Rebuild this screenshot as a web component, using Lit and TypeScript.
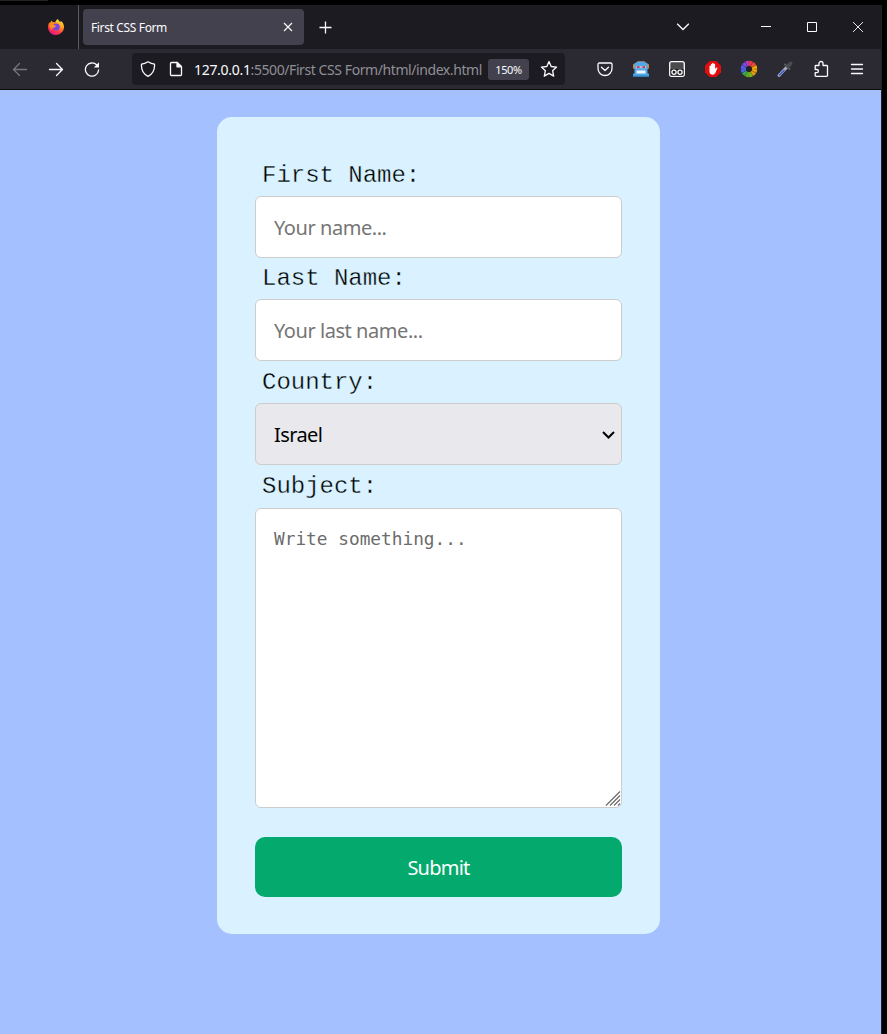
import { LitElement, html, css, svg } from "lit";
import { customElement } from "lit/decorators.js";

const WHEEL = ["#f0383c", "#f04a38", "#f5a800", "#f0a010", "#e0a010", "#7cb518", "#62ae22", "#36a852", "#4a63e8", "#5a5cf0", "#7a48e0", "#b13cc8"];

@customElement("browser-tabs")
class BrowserTabs extends LitElement {
  static styles = css`
    :host { display: flex; height: 44px; background: #1c1b22; color: #fbfbfe; box-sizing: border-box; }
    svg { display: block; fill: none; stroke: #fbfbfe; }
    .brand { width: 31px; border-right: 1px solid #5b5a60; display: flex; align-items: center; padding-left: 47px; }
    .tab { margin: 4px 0 0 4px; width: 221px; height: 36px; box-sizing: border-box; padding: 0 9px 0 8px; border-radius: 4px; background: #42414d; display: flex; align-items: center; justify-content: space-between; font: 12px/18px "Noto Sans", sans-serif; letter-spacing: -0.36px; }
    .title { padding-top: 2px; }
    .plus { margin: 16px 0 0 15px; }
    .controls { margin-left: auto; display: flex; padding-right: 17px; }
    .chevron { margin: 17px 70px 0 0; }
    .min { margin: 16px 34px 0 0; }
    .max { margin: 16px 34px 0 0; }
    .close { margin: 16px 0 0 0; }
  `;
  render() {
    return html`
      <div class="brand">
        <svg width="18" height="18" viewBox="0 0 18 18">
          <defs>
            <linearGradient id="fire" x1="0.8" y1="0" x2="0.3" y2="1">
              <stop offset="0" stop-color="#fff23c"/><stop offset=".4" stop-color="#ff9a1f"/><stop offset=".7" stop-color="#ff3b47"/><stop offset="1" stop-color="#e31587"/>
            </linearGradient>
          </defs>
          <g stroke="none">
            <path fill="url(#fire)" d="M11 1c.3 1.500 1.400 2.300 2.500 3.300.2-.5.200-1 .1-1.500C15.900 4.300 17 6.600 17 9.100 17 13.500 13.400 17 9 17S1 13.500 1 9.200c0-2 .8-3.800 1.300-5l.8 1c.5-1.200 1.100-2 1.900-2.600.1.800.3 1.300.7 1.800 1-.2 1.800 0 2.500.3C8.300 3 9.700 1.600 11 1z"/>
            <path fill="#ff8a16" d="M2.500 5.500c1-1.500 2.500-2 4.500-1.300L8.800 6 6 8.200 4.700 12C3 10 2 8 2.500 5.500z"/>
            <circle cx="9.300" cy="9" r="3.500" fill="#7a43e6"/>
            <path fill="#ff9d25" d="M5 7.600c1.500-.6 2.500-.2 4.200.1-.3 1-1.900 1.200-2.300 2.300-1 .2-2-1-1.900-2.400z"/>
          </g>
        </svg>
      </div>
      <div class="tab"><span class="title">First CSS Form</span>
        <svg width="14" height="14" viewBox="0 0 14 14"><path d="M3 3l8 8M11 3l-8 8" stroke-width="1.100"/></svg>
      </div>
      <svg class="plus" width="13" height="13" viewBox="0 0 13 13"><path d="M6.500.5v12M.5 6.500h12" stroke-width="1.300"/></svg>
      <div class="controls">
        <svg class="chevron" width="14" height="10" viewBox="0 0 14 10"><path d="M1.200 1.800L7 7.500l5.800-5.700" stroke-width="1.300"/></svg>
        <svg class="min" width="12" height="12" viewBox="0 0 12 12"><path d="M1 5.500h10"/></svg>
        <svg class="max" width="12" height="12" viewBox="0 0 12 12"><path d="M1.500 1.500h9v9h-9z"/></svg>
        <svg class="close" width="12" height="12" viewBox="0 0 12 12"><path d="M1 1l10 10M11 1L1 11" stroke-width=".9"/></svg>
      </div>`;
  }
}

@customElement("browser-toolbar")
class BrowserToolbar extends LitElement {
  static styles = css`
    :host { display: flex; align-items: center; height: 41px; box-sizing: border-box; background: #2b2a33; border-bottom: 1px solid #0c0c0d; padding-left: 12px; font-family: "Noto Sans", sans-serif; }
    svg { display: block; flex: none; fill: none; stroke: #fbfbfe; stroke-width: 1.300; stroke-linecap: round; stroke-linejoin: round; }
    .nav { display: flex; gap: 20px; width: 120px; }
    .dim { stroke: #77767d; }
    .url { width: 433px; height: 32px; border-radius: 4px; background: #1c1b22; display: flex; align-items: center; box-sizing: border-box; padding-left: 8px; color: #8f8f95; font-size: 14px; white-space: nowrap; }
    .page { margin-left: 12px; }
    .address { margin-left: 10px; width: 294px; letter-spacing: -0.42px; padding-top: 1px; box-sizing: border-box; }
    .host { color: #fbfbfe; letter-spacing: -0.3px; }
    .zoom { width: 41px; height: 21px; border-radius: 3px; background: #42414d; color: #fbfbfe; font-size: 11px; line-height: 22px; letter-spacing: -0.4px; text-align: center; margin-right: 11px; }
    .tools { display: flex; gap: 18px; margin-left: 31px; }
  `;
  render() {
    const slices = WHEEL.map((color, i) => {
      const p = (r: number, deg: number) => {
        const a = ((deg - 90) * Math.PI) / 180;
        return `${(9 + r * Math.cos(a)).toFixed(2)} ${(9 + r * Math.sin(a)).toFixed(2)}`;
      };
      const s = i * 30 + 1, e = i * 30 + 29;
      return svg`<path stroke="none" fill=${color} d="M${p(3.2, s)}L${p(8.200, s)}A8.200 8.200 0 0 1 ${p(8.200, e)}L${p(3.2, e)}Z"/>`;
    });
    return html`
      <div class="nav">
        <svg class="dim" width="16" height="16" viewBox="0 0 16 16"><path d="M14.500 8.500H1.500M7.500 2.500l-6 6 6 6"/></svg>
        <svg width="16" height="16" viewBox="0 0 16 16"><path d="M1.500 8.500h13M8.500 2.500l6 6-6 6"/></svg>
        <svg width="16" height="16" viewBox="0 0 16 16"><path d="M14.600 9A6.600 6.600 0 1 1 12.800 4"/><path d="M15 1.300v5.200H9.800z" fill="#fbfbfe" stroke="none"/></svg>
      </div>
      <div class="url">
        <svg width="16" height="16" viewBox="0 0 16 16"><path d="M8 .8c2 1.300 4.200 2.200 6.500 2.400C14.900 8.700 12.800 13 8 15.400 3.200 13 1.100 8.700 1.500 3.200 3.800 3 6 2.100 8 .8z"/></svg>
        <svg class="page" width="16" height="16" viewBox="0 0 16 16"><path d="M3.500 1.500h5.700L13.500 5.800v7.700a1 1 0 0 1-1 1h-9a1 1 0 0 1-1-1v-11a1 1 0 0 1 1-1z"/><path d="M9 1.500v4.300h4.500z" fill="#fbfbfe"/></svg>
        <div class="address"><span class="host">127.0.0.1</span>:5500/First CSS Form/html/index.html</div>
        <div class="zoom">150%</div>
        <svg width="18" height="18" viewBox="0 0 18 18"><path d="M9 1.500l2.200 5 5.400.6-4 3.600 1.100 5.400L9 13.400l-4.700 2.700 1.100-5.400-4-3.600 5.400-.6z"/></svg>
      </div>
      <div class="tools">
        <svg width="18" height="18" viewBox="0 0 18 18"><path d="M3.300 3h11.400a1.300 1.300 0 0 1 1.300 1.300V8.500A7 7 0 0 1 2 8.500V4.300A1.300 1.300 0 0 1 3.300 3zM5.500 7.300L9 10.500l3.500-3.200"/></svg>
        <svg width="18" height="18" viewBox="0 0 18 18"><g stroke="none"><rect x="5" y="1" width="8" height="2" rx="1" fill="#8b7b70"/><rect x="1" y="3.500" width="16" height="5.500" rx="1.500" fill="#c88a48"/><path d="M2.500 5Q2.500 2 6 2h6q3.500 0 3.500 3v8.500h.8q.7 0 .7.700V16H1v-1.800q0-.7.700-.7h.8z" fill="#55a8e6"/><path d="M4 6h10v2.300H4z" fill="#b6b8d8"/><path d="M5 6.300h2.500V8H5zM10.500 6.300H13V8h-2.500z" fill="#c53355"/><rect x="4.500" y="10.500" width="9" height="3" rx=".6" fill="#eef5fb"/><path d="M1 15.500h16V17H1z" fill="#2f7fbd"/></g></svg>
        <svg width="18" height="18" viewBox="0 0 18 18"><rect x="1.700" y="1.700" width="14.600" height="14.600" rx="2" fill="#4a4a4c"/><path d="M2.500 9h13v6.500h-13z" fill="#202025" stroke="none"/><circle cx="6" cy="12.200" r="2.100"/><circle cx="12" cy="12.200" r="2.100"/></svg>
        <svg width="18" height="18" viewBox="0 0 18 18"><path fill="#e40d0d" stroke="none" d="M5.700 1h6.600L17 5.700v6.600L12.300 17H5.700L1 12.300V5.700z"/><path fill="#fff" stroke="none" d="M5.500 6q.7-.8 1.400 0V4.200q.7-.8 1.300 0v-1q.8-.9 1.500 0v1q.7-.7 1.400 0V9l1-1.200q1-.6 1.400.1l-2.200 5Q10.500 14.700 8.800 14.700 6 14.700 5.500 12z"/></svg>
        <svg width="18" height="18" viewBox="0 0 18 18"><circle cx="9" cy="9" r="7.500" fill="#202025" stroke="none"/>${slices}</svg>
        <svg width="18" height="18" viewBox="0 0 18 18"><path d="M3 15.500L10.500 7.500" stroke="#a9adbb" stroke-width="3"/><path d="M3.500 15L8 10.500" stroke="#3e5fd0" stroke-width="1.700"/><path d="M9 4.500l4.500 4.500" stroke="#5c5c60" stroke-width="1.800"/><path d="M12 6.200L14.500 3.500" stroke="#4c4c50" stroke-width="3.800"/></svg>
        <svg width="18" height="18" viewBox="0 0 18 18"><path d="M4 5.500h3V3.500a2 2 0 0 1 4 0v2h3.700a.8.800 0 0 1 .8.800v9.200a.8.800 0 0 1-.8.800H4a.8.800 0 0 1-.8-.8v-2.800h1.600a1.500 1.500 0 0 0 0-3.200H3.200V6.300q0-.8.800-.8z"/></svg>
        <svg width="18" height="18" viewBox="0 0 18 18"><path d="M3.500 4.500h11M3.500 9h11M3.500 13.500h11"/></svg>
      </div>`;
  }
}

@customElement("contact-form")
class ContactForm extends LitElement {
  static styles = css`
    :host { display: block; box-sizing: border-box; width: 443px; height: 817px; padding: 38px; border-radius: 15px; background: #daf2ff; }
    .form { display: grid; grid-template-rows: 41px 62px 41px 62px 42px 62px 43px 300px 29px 60px; }
    .label { padding-left: 7px; font: 24px/41px "Liberation Mono", monospace; color: #000; letter-spacing: -0.02px; -webkit-text-stroke: 0.35px #daf2ff; }
    .low { line-height: 43px; }
    .control { box-sizing: border-box; width: 100%; margin: 0; border: 1px solid #ccc; border-radius: 6px; background: #fff; padding: 0 18px; font: 20px "Noto Sans", sans-serif; letter-spacing: -0.45px; color: #000; outline: none; }
    .control::placeholder { color: #757575; opacity: 1; }
    .select { background: #e9e9ed; display: flex; justify-content: space-between; align-items: center; padding-right: 5px; letter-spacing: -0.6px; }
    .area { position: relative; padding: 17px 18px; font: 17.800px/25px "DejaVu Sans Mono", monospace; letter-spacing: 0; color: #6c6c6c; }
    .grip { position: absolute; right: -1px; bottom: 0; }
    .submit { grid-row: 10; border: 0; border-radius: 10px; background: #04aa6d; color: #fff; font: 20px "Noto Sans", sans-serif; letter-spacing: -0.75px; padding: 0; }
    svg { display: block; fill: none; }
  `;
  render() {
    return html`<div class="form">
      <label class="label">First Name:</label>
      <input class="control" placeholder="Your name...">
      <label class="label">Last Name:</label>
      <input class="control" placeholder="Your last name...">
      <label class="label low">Country:</label>
      <div class="control select"><span>Israel</span>
        <svg width="15" height="12" viewBox="0 0 15 12"><path d="M2 4l5.500 5.500L13 4" stroke="#000" stroke-width="2"/></svg>
      </div>
      <label class="label low">Subject:</label>
      <div class="control area">Write something...
        <svg class="grip" width="17" height="17" viewBox="0 0 17 17"><path d="M1 15.500L15 1.500M5 15.500L15 5.500M9 15.500l6-6M13 15.500l2-2" stroke="#6c6c6c" stroke-width="1.200"/></svg>
      </div>
      <button class="submit">Submit</button>
    </div>`;
  }
}

@customElement("app-root")
class AppRoot extends LitElement {
  static styles = css`
    :host { display: block; box-sizing: border-box; width: 887px; height: 1034px; background: #000; overflow: hidden; }
    .edge { height: 5px; background: #000; }
    .strip { width: 48px; height: 1px; background: #222; }
    .window { width: 881px; border-right: 1px solid #202024; }
    .page { height: 944px; box-sizing: border-box; background: #a5c0ff; padding: 27px 0 0 217px; }
  `;
  render() {
    return html`
      <div class="edge"><div class="strip"></div></div>
      <div class="window">
        <browser-tabs></browser-tabs>
        <browser-toolbar></browser-toolbar>
        <div class="page"><contact-form></contact-form></div>
      </div>`;
  }
}
